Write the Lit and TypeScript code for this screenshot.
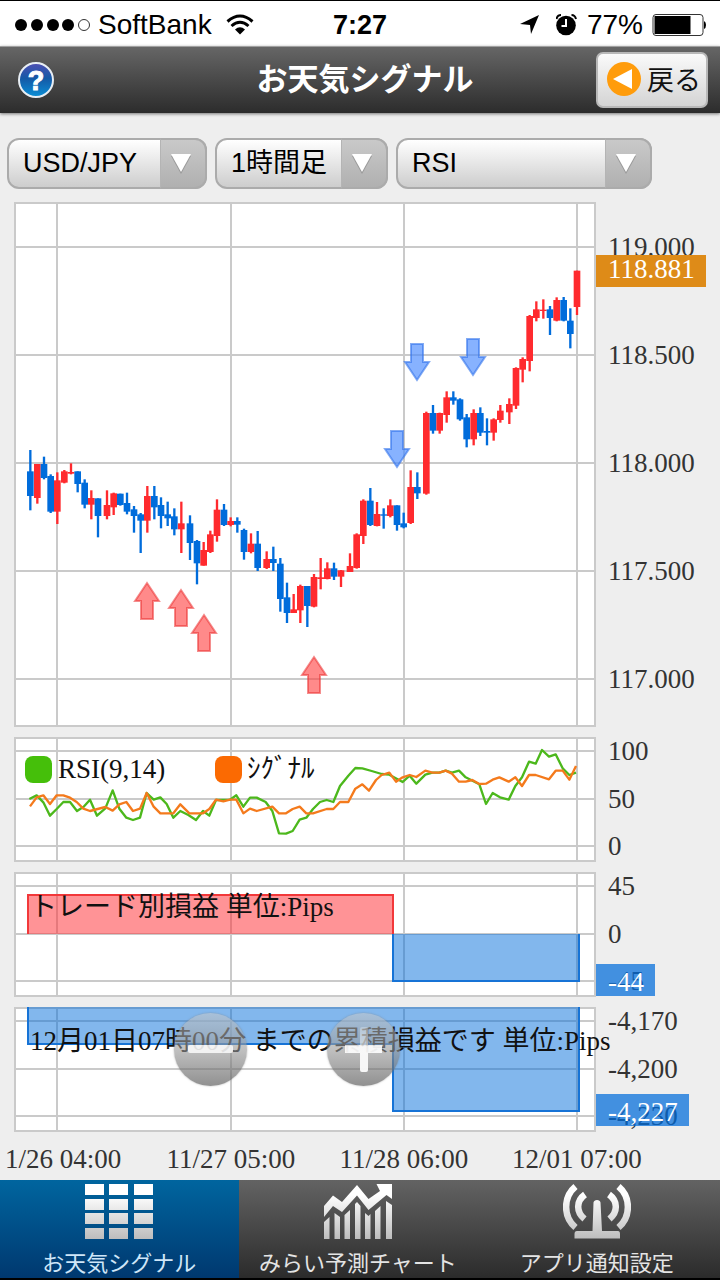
import { LitElement, html, svg, css } from "lit";
import { customElement } from "lit/decorators.js";

type Bar = [string, number, number, number, number, number];

// Price bars: direction, centre, high, body top, body bottom, low; three units to a chart pixel.
const SESSIONS: { x: number; y: number; bars: Bar[] }[] = [
  {
    x: 10, y: 420,
    bars: [
      ["d", 61, 90, 154, 228, 271], ["u", 82, 132, 132, 234, 251], ["d", 102, 110, 132, 174, 178],
      ["d", 122, 163, 168, 275, 279], ["u", 142, 157, 181, 275, 312], ["u", 163, 150, 154, 188, 190],
      ["u", 183, 130, 156, 161, 163], ["d", 203, 154, 154, 192, 217], ["d", 224, 178, 188, 254, 265],
      ["u", 244, 211, 234, 254, 298], ["d", 264, 235, 235, 288, 352], ["u", 291, 211, 255, 288, 298],
      ["u", 311, 218, 220, 262, 285], ["d", 331, 221, 221, 255, 257], ["d", 351, 218, 249, 275, 283],
      ["d", 372, 258, 268, 288, 338], ["d", 392, 279, 283, 302, 399], ["u", 412, 198, 228, 302, 338],
      ["d", 433, 198, 228, 262, 298], ["d", 453, 232, 255, 288, 325], ["d", 473, 245, 283, 295, 318],
      ["d", 493, 265, 289, 328, 346], ["u", 514, 245, 310, 328, 399], ["d", 540, 286, 310, 369, 420],
      ["d", 561, 360, 363, 430, 493], ["u", 581, 366, 390, 437, 437],
    ],
  },
  {
    x: 200, y: 480,
    bars: [
      ["u", 31, 152, 163, 216, 219], ["u", 51, 58, 89, 168, 185], ["d", 72, 72, 89, 135, 138],
      ["u", 92, 112, 123, 135, 139], ["d", 112, 112, 123, 134, 158], ["d", 132, 146, 150, 216, 239],
      ["u", 153, 160, 191, 216, 220], ["d", 173, 153, 191, 264, 273], ["u", 200, 214, 237, 264, 267],
      ["d", 220, 200, 237, 249, 273], ["d", 241, 234, 251, 357, 395], ["d", 261, 308, 352, 399, 429],
      ["u", 281, 342, 388, 399, 399], ["u", 301, 314, 318, 391, 429], ["d", 322, 318, 318, 378, 441],
      ["u", 342, 282, 291, 380, 382], ["u", 362, 234, 292, 297, 328], ["u", 382, 247, 265, 297, 298],
      ["d", 402, 248, 265, 290, 300], ["u", 423, 270, 271, 290, 321], ["u", 450, 220, 258, 276, 276],
      ["u", 470, 160, 163, 264, 266], ["u", 490, 58, 62, 168, 192], ["d", 511, 24, 62, 135, 138],
      ["u", 531, 66, 102, 138, 139], ["d", 551, 85, 103, 107, 146], ["u", 571, 58, 76, 108, 112],
      ["d", 591, 76, 76, 135, 152],
    ],
  },
  {
    x: 350, y: 330,
    bars: [
      ["d", 161, 548, 580, 592, 595], ["u", 182, 421, 471, 579, 582], ["d", 202, 427, 471, 490, 507],
      ["u", 229, 245, 249, 491, 494], ["d", 249, 225, 249, 302, 311], ["u", 269, 248, 249, 302, 311],
      ["u", 290, 184, 202, 255, 278], ["d", 310, 184, 202, 212, 224], ["d", 330, 205, 208, 268, 272],
      ["d", 350, 252, 262, 328, 352], ["u", 371, 238, 249, 328, 346], ["d", 391, 232, 249, 308, 318],
      ["d", 411, 265, 303, 308, 346], ["u", 431, 265, 268, 308, 332],
    ],
  },
  {
    x: 480, y: 200,
    bars: [
      ["u", 61, 615, 632, 660, 668], ["u", 88, 595, 612, 637, 672], ["u", 108, 502, 504, 617, 627],
      ["u", 128, 472, 477, 509, 547], ["u", 149, 345, 348, 483, 514], ["u", 169, 304, 328, 354, 364],
      ["u", 190, 298, 329, 333, 356], ["d", 210, 318, 328, 354, 405], ["u", 230, 292, 300, 362, 364],
      ["d", 251, 291, 300, 362, 364], ["d", 271, 325, 362, 402, 445], ["u", 291, 212, 212, 321, 345],
    ],
  },
];

const RSI =
  "88,207 110,196 130,217 150,257 170,237 190,216 210,216 231,243 251,230 270,209 291,257 316,235 338,181 358,236 379,263 399,270 420,263 440,189 461,209 481,202 500,222 520,263 541,243 565,255 588,270 609,243 628,257 648,210 690,209 709,196 730,230 750,203 770,203 797,216 817,243 837,310 858,311 878,303 899,269 919,263 939,237 960,216 980,210 1000,216 1020,168 1045,137 1066,114 1087,115 1115,123 1145,132 1168,134 1208,156 1229,137 1249,161 1276,134 1297,128 1318,128 1337,122 1356,128 1377,122 1397,142 1438,163 1458,222 1478,189 1500,202 1526,209 1546,168 1566,142 1587,95 1607,101 1626,60 1647,80 1667,73 1688,115 1708,135 1728,128";
const SIGNAL =
  "90,229 110,202 130,196 150,222 170,196 190,196 210,203 230,216 250,236 270,243 316,231 338,242 358,223 379,216 399,243 420,236 440,189 461,230 481,250 520,250 541,223 568,250 609,250 628,237 648,209 670,214 690,209 709,209 730,250 750,236 770,243 817,230 837,250 858,250 878,237 899,230 919,250 939,250 980,237 1000,237 1020,216 1045,216 1066,176 1087,163 1107,182 1128,150 1145,135 1168,128 1188,155 1208,142 1229,135 1249,141 1276,122 1297,128 1318,128 1337,122 1356,131 1377,155 1397,155 1417,150 1438,162 1458,161 1478,149 1498,142 1526,155 1546,142 1566,168 1587,135 1607,135 1647,148 1667,122 1688,122 1708,149 1728,108";

const SELL_MARKS = [[417, 344], [473, 339], [397, 431]];
const BUY_MARKS = [[147, 582], [181, 589], [204, 614], [314, 656]];
const COLUMNS = [57, 231, 404, 577];

const grid = (top: number, bottom: number, rows: number[]) => svg`
  <rect class="plot" x="15" y=${top} width="580" height=${bottom - top}></rect>
  ${rows.map((y) => svg`<line class="grid" x1="15" x2="595" y1=${y} y2=${y}></line>`)}
  ${COLUMNS.map((x) => svg`<line class="grid" x1=${x} x2=${x} y1=${top} y2=${bottom}></line>`)}
`;

const ticks = (rows: [number, string][]) =>
  rows.map(([y, label]) => svg`<text class="tick" x="608" y=${y + 9}>${label}</text>`);

@customElement("app-root")
export class AppRoot extends LitElement {
  static styles = css`
    :host {
      display: flex;
      flex-direction: column;
      min-height: 100vh;
      box-sizing: border-box;
      background: #eeeeee;
      color: #000;
      font-family: "Liberation Sans", "Noto Sans CJK JP", sans-serif;
    }
    .status {
      display: grid;
      grid-template-columns: 1fr auto 1fr;
      align-items: center;
      height: 46px;
      box-sizing: border-box;
      padding: 3px 14px 0 14px;
      border-top: 1px solid #000;
      background: #fff;
      font-size: 28px;
      line-height: 40px;
    }
    .status-side { display: flex; align-items: center; gap: 6px; }
    .status-end { justify-content: flex-end; gap: 9px; }
    .carrier { margin-right: 8px; }
    .clock { font-size: 27px; font-weight: 700; }
    .header {
      display: grid;
      grid-template-columns: 116px 1fr 112px;
      align-items: center;
      height: 67px;
      box-sizing: border-box;
      padding: 0 12px 0 18px;
      border-top: 1px solid #a0a0a0;
      background: linear-gradient(#666, #2c2c2c);
      box-shadow: 0 1px 3px rgba(0, 0, 0, 0.5);
    }
    .title {
      margin: 0;
      color: #fff;
      font-size: 31px;
      line-height: 40px;
      font-weight: 700;
      text-align: center;
    }
    .help { display: block; width: 36px; height: 36px; padding: 0; border: 0; background: none; }
    .help-mark { fill: #fff; font: 700 27px "Liberation Sans", sans-serif; text-anchor: middle; }
    .back {
      display: flex;
      align-items: center;
      gap: 6px;
      height: 56px;
      padding: 0 4px 3px 9px;
      border: 2px solid #b8b8b8;
      border-radius: 7px;
      background: linear-gradient(#fafafa, #d4d4d4);
      color: #111;
      font: 27px/36px "Noto Sans CJK JP", sans-serif;
      white-space: nowrap;
    }
    .toolbar { display: flex; gap: 8px; padding: 25px 7px 7px; }
    .picker { display: grid; height: 51px; }
    .picker-pair { width: 200px; }
    .picker-span { width: 173px; }
    .picker-study { width: 256px; }
    .select {
      grid-area: 1 / 1;
      width: 100%;
      box-sizing: border-box;
      margin: 0;
      padding: 0 46px 2px 14px;
      border: 2px solid #ababab;
      border-radius: 12px;
      background: linear-gradient(#fff, #cdcdcd);
      color: #000;
      font: 27px/32px "Liberation Sans", "Noto Sans CJK JP", sans-serif;
      appearance: none;
    }
    .arrow {
      grid-area: 1 / 1;
      justify-self: end;
      display: grid;
      place-items: center;
      width: 47px;
      box-sizing: border-box;
      padding-right: 4px;
      border: 2px solid #ababab;
      border-left: 1px solid #b4b4b4;
      border-radius: 0 12px 12px 0;
      background: linear-gradient(#c9c9c9, #b0b0b0);
      pointer-events: none;
    }
    .charts { position: relative; flex: 1; }
    .panel { display: block; width: 100%; overflow: visible; }
    .plot { fill: #fff; stroke: #cacaca; stroke-width: 2; }
    .grid { stroke: #cacaca; stroke-width: 2; }
    .tick, .note {
      font: 27px "Liberation Serif", "Noto Sans CJK JP", serif;
      fill: #333;
    }
    .note { fill: #111; }
    .on-tag { fill: #fff; }
    .u { fill: #ff2a2e; }
    .d { fill: #006cdb; }
    .mark-sell { fill: rgba(70, 137, 255, 0.65); stroke: rgba(50, 115, 235, 0.6); stroke-width: 2; }
    .mark-buy { fill: rgba(255, 60, 60, 0.6); stroke: rgba(235, 50, 50, 0.55); stroke-width: 2; }
    .rsi, .signal { fill: none; stroke-width: 7; stroke-linejoin: round; }
    .rsi { stroke: #4cb81c; }
    .signal { stroke: #f47a1c; }
    .price-tag { fill: #de8b18; }
    .pips-tag { fill: rgba(0, 108, 219, 0.72); }
    .gain { fill: rgba(255, 40, 45, 0.5); }
    .loss { fill: rgba(0, 108, 219, 0.49); }
    .gain-edge { fill: none; stroke: #f2383a; stroke-width: 2; }
    .loss-edge { fill: none; stroke: #1673d6; stroke-width: 2; }
    .last { position: relative; }
    .zoom {
      position: absolute;
      top: 11px;
      width: 73px;
      height: 73px;
      padding: 0;
      border: 0;
      border-radius: 50%;
      background: linear-gradient(rgba(200, 200, 200, 0.55), rgba(150, 150, 150, 0.6) 50%, rgba(85, 85, 85, 0.65));
      box-shadow: 0 0 2px rgba(120, 120, 120, 0.6);
    }
    .zoom-out { left: 24.2%; }
    .zoom-in { left: 45.4%; }
    .zoom-glyph { display: block; }
    .tabs {
      display: grid;
      grid-template-columns: repeat(3, 1fr);
      height: 100px;
      box-sizing: border-box;
      padding-right: 4px;
      border-bottom: 2px solid #000;
      background: linear-gradient(#636363, #2b2b2b);
    }
    .tab {
      display: flex;
      flex-direction: column;
      align-items: center;
      gap: 6px;
      padding-top: 4px;
      color: #e4e4e4;
      font: 22px/32px "Noto Sans CJK JP", sans-serif;
      text-decoration: none;
      white-space: nowrap;
    }
    .tab-active { background: linear-gradient(#00659f, #00386f); color: #cfe6f8; }
  `;

  private statusBar() {
    return html`
      <div class="status">
        <div class="status-side">
          <svg width="78" height="14" viewBox="0 0 78 14">
            ${[7, 23, 39, 54].map((x) => svg`<circle cx=${x} cy="7" r="6"></circle>`)}
            <circle cx="70" cy="7" r="5.5" fill="none" stroke="#333"></circle>
          </svg>
          <span class="carrier">SoftBank</span>
          <svg width="28" height="22" viewBox="0 0 28 22" fill="none" stroke="#000" stroke-width="3">
            <path d="M1.500 7.500Q14-3.500 26.500 7.500"></path>
            <path d="M5.500 12Q14 4.500 22.500 12"></path>
            <path d="M9 15.500Q14 11 19 15.500L14 20.500Z" fill="#000" stroke="none"></path>
          </svg>
        </div>
        <span class="clock">7:27</span>
        <div class="status-side status-end">
          <svg width="28" height="22" viewBox="0 0 28 22"><path d="M20 1L12 20L11 11L1 10Z"></path></svg>
          <svg width="22" height="22" viewBox="0 0 22 22">
            <circle cx="10" cy="11.500" r="9.800"></circle>
            <path d="M0.500 5Q1.500 1 5 1M20 5Q19 1 15.500 1" fill="none" stroke="#000" stroke-width="2"></path>
            <path d="M10 5V12H5.500" fill="none" stroke="#fff" stroke-width="2"></path>
          </svg>
          <span>77%</span>
          <svg width="54" height="24" viewBox="0 0 54 24">
            <rect x="1" y="1.500" width="50" height="21" rx="3" fill="#fff" stroke="#333"></rect>
            <rect x="2.500" y="3" width="36" height="18"></rect>
            <path d="M52 8Q54 9 54 12T52 16Z"></path>
          </svg>
        </div>
      </div>
    `;
  }

  private header() {
    return html`
      <header class="header">
        <button class="help" aria-label="ヘルプ">
          <svg width="36" height="36" viewBox="0 0 36 36">
            <defs>
              <linearGradient id="help-fill" x1="0" y1="0" x2="0" y2="1">
                <stop offset="0" stop-color="#4f4fb4"></stop>
                <stop offset=".45" stop-color="#1559a6"></stop>
                <stop offset="1" stop-color="#0a8fd6"></stop>
              </linearGradient>
            </defs>
            <circle cx="18" cy="18" r="17" fill="url(#help-fill)" stroke="#e8eef4" stroke-width="2"></circle>
            <text class="help-mark" x="18" y="28" stroke="#fff">?</text>
          </svg>
        </button>
        <h1 class="title">お天気シグナル</h1>
        <button class="back">
          <svg width="34" height="34" viewBox="0 0 34 34">
            <circle cx="17" cy="17" r="17" fill="#ff9c0c"></circle>
            <path d="M6 17L25 7V27Z" fill="#fff"></path>
          </svg>
          戻る
        </button>
      </header>
    `;
  }

  private picker(kind: string, label: string, value: string) {
    return html`
      <div class="picker picker-${kind}">
        <select class="select" aria-label=${label}><option>${value}</option></select>
        <span class="arrow">
          <svg width="22" height="22" viewBox="0 0 22 22">
            <path d="M1 3H21L11 21Z" fill="#999"></path>
            <path d="M1 1H21L11 19Z" fill="#fff"></path>
          </svg>
        </span>
      </div>
    `;
  }

  private pricePanel() {
    return html`
      <svg class="panel" viewBox="0 196 720 536">
        ${grid(203, 726, [247, 355, 463, 571, 679])}
        ${SESSIONS.map(
          (s) => svg`<g transform="translate(${s.x} ${s.y}) scale(${1 / 3})">
            ${s.bars.map(
              ([dir, x, high, top, bottom, low]) => svg`
                <rect class=${dir} x=${x - 3.5} y=${high} width="7" height=${low - high}></rect>
                <rect class=${dir} x=${x - 10} y=${top} width="20" height=${bottom - top}></rect>`
            )}
          </g>`
        )}
        ${SELL_MARKS.map(
          ([x, y]) => svg`<path class="mark-sell" transform="translate(${x} ${y})" d="M-6 0H6V18H12L0 36L-12 18H-6Z"></path>`
        )}
        ${BUY_MARKS.map(
          ([x, y]) => svg`<path class="mark-buy" transform="translate(${x} ${y})" d="M0 1L12 19H6V37H-6V19H-12Z"></path>`
        )}
        ${ticks([[247, "119.000"], [355, "118.500"], [463, "118.000"], [571, "117.500"], [679, "117.000"]])}
        <rect class="price-tag" x="596" y="255" width="110" height="32"></rect>
        <text class="tick on-tag" x="608" y="278">118.881</text>
      </svg>
    `;
  }

  private rsiPanel() {
    return html`
      <svg class="panel" viewBox="0 732 720 135">
        ${grid(738, 861, [751, 799, 846])}
        <g transform="translate(0 730) scale(${1 / 3})">
          <polyline class="rsi" points=${RSI}></polyline>
          <polyline class="signal" points=${SIGNAL}></polyline>
        </g>
        <rect x="25" y="756" width="27" height="27" rx="8" fill="#45bf0a"></rect>
        <text class="note" x="58" y="778">RSI(9,14)</text>
        <rect x="215" y="756" width="27" height="27" rx="8" fill="#fb6a02"></rect>
        <text class="note" x="247" y="778">ｼｸﾞﾅﾙ</text>
        ${ticks([[751, "100"], [799, "50"], [846, "0"]])}
      </svg>
    `;
  }

  private tradePanel() {
    return html`
      <svg class="panel" viewBox="0 867 720 135">
        ${grid(873, 996, [886, 934, 981])}
        <rect class="gain" x="28" y="895" width="365" height="39"></rect>
        <path class="gain-edge" d="M28 934V895H393V934"></path>
        <rect class="loss" x="393" y="934" width="186" height="47"></rect>
        <path class="loss-edge" d="M393 934V981H579V934"></path>
        <text class="note" x="30" y="916">トレード別損益 単位:Pips</text>
        ${ticks([[886, "45"], [934, "0"], [981, "-45"]])}
        <rect class="pips-tag" x="596" y="964" width="59" height="32"></rect>
        <text class="tick on-tag" x="608" y="991">-44</text>
      </svg>
    `;
  }

  private totalPanel() {
    return html`
      <div class="last">
        <svg class="panel" viewBox="0 1002 720 135">
          ${grid(1008, 1131, [1021, 1069, 1116])}
          <path class="loss" d="M28 1007H579V1111H393V1044H28Z"></path>
          <path class="loss-edge" d="M28 1007V1044H393V1111H579V1007"></path>
          <text class="note" x="30" y="1050">12月01日07時00分 までの累積損益です 単位:Pips</text>
          ${ticks([[1021, "-4,170"], [1069, "-4,200"], [1116, "-4,230"]])}
          <rect class="pips-tag" x="596" y="1094" width="93" height="32"></rect>
          <text class="tick on-tag" x="608" y="1121">-4,227</text>
        </svg>
        <button class="zoom zoom-out" aria-label="縮小">
          <svg class="zoom-glyph" width="73" height="73" viewBox="0 0 73 73">
            <rect x="14" y="32" width="45" height="8" rx="2" fill="#fff" fill-opacity=".8"></rect>
          </svg>
        </button>
        <button class="zoom zoom-in" aria-label="拡大">
          <svg class="zoom-glyph" width="73" height="73" viewBox="0 0 73 73">
            <defs>
              <linearGradient id="gloss" gradientUnits="userSpaceOnUse" x1="0" y1="14" x2="0" y2="60">
                <stop offset="0" stop-color="#fff" stop-opacity=".25"></stop>
                <stop offset=".38" stop-color="#fff" stop-opacity=".5"></stop>
                <stop offset=".42" stop-color="#fff" stop-opacity=".88"></stop>
                <stop offset="1" stop-color="#fff" stop-opacity=".92"></stop>
              </linearGradient>
            </defs>
            <path d="M33 16Q33 14 35 14H39Q41 14 41 16V32H55V40H41V57Q41 59 39 59H35Q33 59 33 57V40H18V32H33Z" fill="url(#gloss)"></path>
          </svg>
        </button>
      </div>
    `;
  }

  private timeAxis() {
    return html`
      <svg class="panel" viewBox="0 1137 720 43">
        <text class="tick" x="5" y="1168">1/26 04:00</text>
        <text class="tick" x="231" y="1168" text-anchor="middle">11/27 05:00</text>
        <text class="tick" x="404" y="1168" text-anchor="middle">11/28 06:00</text>
        <text class="tick" x="577" y="1168" text-anchor="middle">12/01 07:00</text>
      </svg>
    `;
  }

  private tabs() {
    const shine = (id: string) => svg`
      <defs>
        <linearGradient id=${id} gradientUnits="userSpaceOnUse" x1="0" y1="0" x2="0" y2="55">
          <stop offset=".2" stop-color="#fff"></stop>
          <stop offset="1" stop-color="#bdbdbd"></stop>
        </linearGradient>
      </defs>`;
    return html`
      <nav class="tabs">
        <a class="tab tab-active" href="#signal" aria-current="page">
          <svg width="68" height="55" viewBox="0 0 68 55" fill="url(#shine-a)">
            ${shine("shine-a")}
            ${[0, 15, 29, 44].map((y) => [0, 24, 49].map((x) => svg`<rect x=${x} y=${y} width="19" height="11"></rect>`))}
          </svg>
          お天気シグナル
        </a>
        <a class="tab" href="#forecast">
          <svg width="68" height="55" viewBox="0 0 68 55" fill="url(#shine-b)">
            ${shine("shine-b")}
            <path d="M0 22L9 11.500L18 18L33 1L44.500 15L56 7L52.500 0H68V15L62.500 11L44.500 26L33 11.500L18 28L9 22L0 33Z"></path>
            <path d="M0 38L5.500 33V55H0ZM10.500 29L16 33V55H10.500ZM20.500 31L26 26V55H20.500ZM31 20L33 18L36.500 22V55H31ZM41 29L44.500 32L46.500 30V55H41ZM51 27L56.500 22V55H51ZM62 17L68 21V55H62Z"></path>
          </svg>
          みらい予測チャート
        </a>
        <a class="tab" href="#notice">
          <svg width="68" height="55" viewBox="0 0 68 55" fill="none" stroke="url(#shine-c)" stroke-width="6.500">
            ${shine("shine-c")}
            <path d="M12.500 2.500C0 13 0 33 12.500 43.500M22 10.500C13 17 13 28 21.500 35M55.500 2.500C68 13 68 33 55.500 43.500M46 10.500C55 17 55 28 46.500 35"></path>
            <path d="M30.500 18.500Q31 16 34 16T37.500 18.500L39 47H55Q57 47 57 50V54.500H11.500V50Q11.500 47 14 47H29.500Z" fill="url(#shine-c)" stroke="none"></path>
          </svg>
          アプリ通知設定
        </a>
      </nav>
    `;
  }

  render() {
    return html`
      ${this.statusBar()} ${this.header()}
      <div class="toolbar">
        ${this.picker("pair", "通貨ペア", "USD/JPY")}
        ${this.picker("span", "足種", "1時間足")}
        ${this.picker("study", "テクニカル指標", "RSI")}
      </div>
      <main class="charts">
        ${this.pricePanel()} ${this.rsiPanel()} ${this.tradePanel()} ${this.totalPanel()} ${this.timeAxis()}
      </main>
      ${this.tabs()}
    `;
  }
}
